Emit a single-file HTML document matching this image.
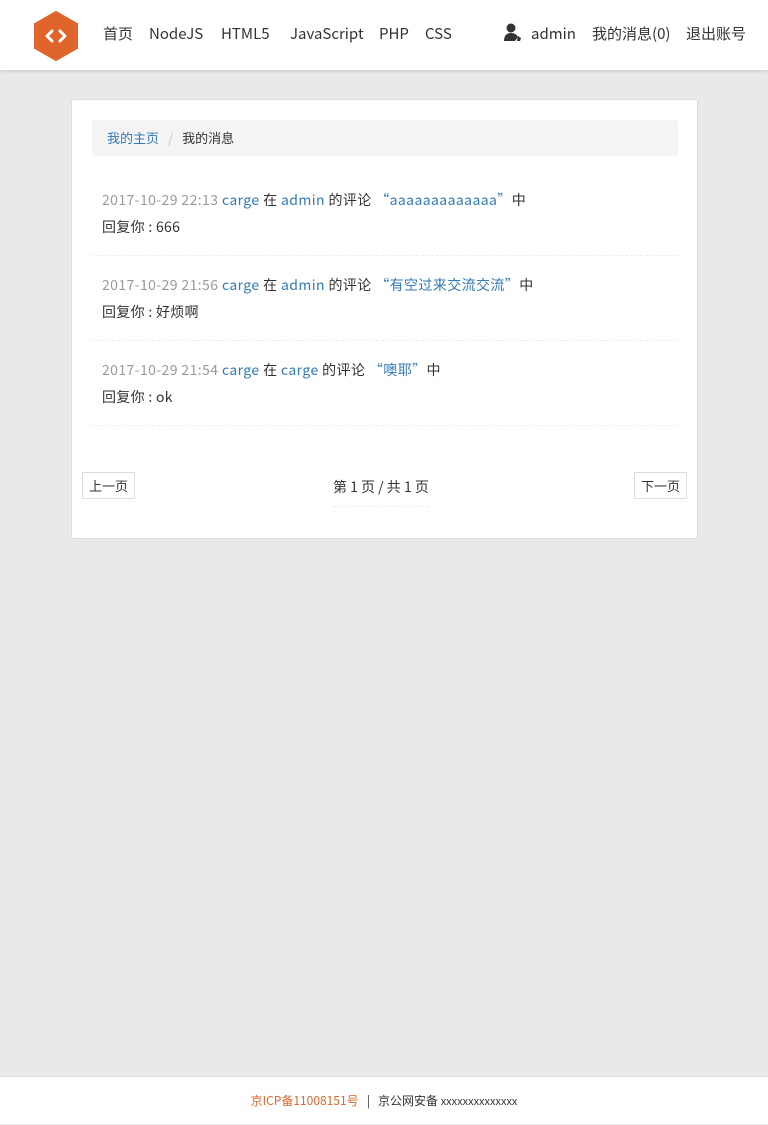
<!DOCTYPE html>
<html><head><meta charset="utf-8"><style>
*{margin:0;padding:0;box-sizing:border-box}
body{width:768px;height:1124px;background:#e9e9e9;font-family:"Noto Sans CJK SC","Liberation Sans",sans-serif;color:#333;position:relative;overflow:hidden}
.hd{position:absolute;left:0;top:0;width:768px;height:70px;background:#fff;box-shadow:0 1px 3px rgba(0,0,0,.15)}
.hd span{position:absolute;top:23px;height:22px;line-height:22px;font-size:15px;color:#333;white-space:nowrap}
.box{position:absolute;left:71px;top:99px;width:627px;height:440px;background:#fff;border:1px solid #ddd;border-radius:3px}
.bc{position:absolute;left:20px;top:20px;width:586px;height:36px;background:#f4f4f4;border-radius:3px;font-size:13px;line-height:36px;padding-left:15px}
a{color:#337ab7;text-decoration:none}
.it{position:absolute;left:20px;width:586px;height:85px;border-bottom:1px dashed #eee;padding-left:10px;font-size:14px}
.it .l1,.it .l2{position:absolute;left:10px;white-space:nowrap;line-height:20px}
.it .l1{top:19px;letter-spacing:0.4px}
.it .l2{top:46px;letter-spacing:0.3px}
.g{color:#999}
.btn{position:absolute;top:372px;height:27px;border:1px solid #ddd;font-size:13px;line-height:25px;padding:0 6px;background:#fff}
.ft{position:absolute;left:0;top:1076px;width:768px;height:48px;background:#fff;border-top:1px solid #ddd;text-align:center;font-size:12px;line-height:48px}
</style></head><body>
<div class="hd">
<svg style="position:absolute;left:34px;top:11px" width="44" height="50" viewBox="0 0 44 50"><polygon points="22,1 43,13 43,37 22,49 1,37 1,13" fill="#e0652a" stroke="#e0652a" stroke-linejoin="round" stroke-width="2"/><path d="M18 20l-5 5 5 5M26 20l5 5-5 5" stroke="#fff" stroke-width="3" fill="none" stroke-linecap="round" stroke-linejoin="round"/></svg>
<span style="left:103px">首页</span><span style="left:149px">NodeJS</span><span style="left:221px">HTML5</span><span style="left:290px">JavaScript</span><span style="left:379px">PHP</span><span style="left:425px">CSS</span>
<svg style="position:absolute;left:503px;top:23px" width="20" height="20" viewBox="0 0 20 20"><circle cx="8" cy="5" r="4.5" fill="#333"/><path d="M1 18c0-6 3-8 7-8s6 2 7 4l-3 4z" fill="#333"/><path d="M15 13l3 2-1 3h-3z" fill="#333"/></svg>
<span style="left:531px">admin</span><span style="left:592px">我的消息(0)</span><span style="left:686px">退出账号</span>
</div>
<div class="box">
<div class="bc"><a>我的主页</a><span style="color:#ccc;margin:0 9px">/</span>我的消息</div>
<div class="it" style="top:71px"><div class="l1"><span class="g">2017-10-29 22:13</span> <a>carge</a> 在 <a>admin</a> 的评论 <a>“aaaaaaaaaaaaa”</a>中</div><div class="l2">回复你 : 666</div></div>
<div class="it" style="top:156px"><div class="l1"><span class="g">2017-10-29 21:56</span> <a>carge</a> 在 <a>admin</a> 的评论 <a>“有空过来交流交流”</a>中</div><div class="l2">回复你 : 好烦啊</div></div>
<div class="it" style="top:241px"><div class="l1"><span class="g">2017-10-29 21:54</span> <a>carge</a> 在 <a>carge</a> 的评论 <a>“噢耶”</a>中</div><div class="l2">回复你 : ok</div></div>
<div class="btn" style="left:10px">上一页</div>
<div style="position:absolute;left:261px;top:377px;font-size:14px;line-height:20px;border-bottom:1px dashed #eee;padding-bottom:9px">第 1 页 / 共 1 页</div>
<div class="btn" style="left:562px">下一页</div>
</div>
<div class="ft"><span style="color:#e0652a">京ICP备11008151号</span> &nbsp;&nbsp;|&nbsp;&nbsp; 京公网安备 <span style="font-size:11px">xxxxxxxxxxxxxx</span></div>
</body></html>
